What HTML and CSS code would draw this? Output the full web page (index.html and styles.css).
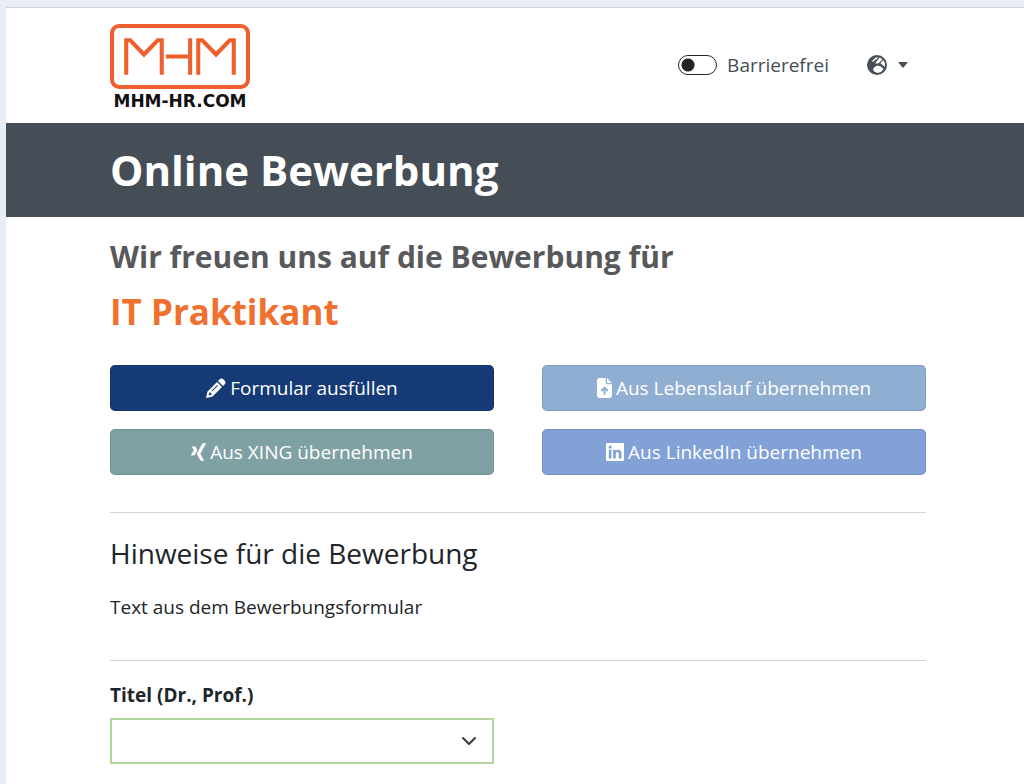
FILE: index.html
```html
<!DOCTYPE html>
<html lang="de">
  <head>
    <meta charset="UTF-8" />
    <meta name="viewport" content="width=device-width, initial-scale=1.0" />
    <title>Online Bewerbung</title>
    <link rel="stylesheet" href="styles.css" />
  </head>
  <body>
    <div class="page">
      <header class="header container">
        <a href="#" class="logo">
          <svg class="logo-mark" viewBox="0 0 138 64" aria-hidden="true">
            <rect x="2" y="2" width="134" height="60" rx="7" />
            <polyline points="16,50 16,16 20,16 33.500,30 47,16 51,16 51,50" />
            <path d="M55 32H79M79 14V50" />
            <polyline points="87,50 87,16 91,16 104.500,30 118,16 122,16 122,50" />
          </svg>
          <span class="logo-text">MHM-HR.COM</span>
        </a>
        <div class="tools">
          <label class="switch">
            <input type="checkbox" role="switch" />
            <span>Barrierefrei</span>
          </label>
          <button type="button" class="lang" aria-label="Sprache">
            <svg class="globe" viewBox="0 0 20 20" aria-hidden="true">
              <circle cx="10" cy="10" r="10" fill="currentColor" />
              <path fill="#fff" d="M5 6 8 3 11 2 10 4 7.500 5.500 6 7ZM12.500 2.500 15.500 4 13.500 6.500 11 8.500 8 8.500 10 6ZM16 5 18 8 18 12 15 9.500 13.500 8.500ZM7.500 12 10.500 10.500 14 11.500 16.500 14 14 17 10.500 18 7 16.500 6 14Z" />
            </svg>
            <span class="caret"></span>
          </button>
        </div>
      </header>

      <div class="title-bar">
        <div class="container">
          <h1>Online Bewerbung</h1>
        </div>
      </div>

      <main class="container">
        <h2 class="intro">Wir freuen uns auf die Bewerbung für</h2>
        <h2 class="job">IT Praktikant</h2>

        <div class="actions">
          <button type="button" class="btn btn-form">
            <svg class="icon" viewBox="0 0 20 20" aria-hidden="true">
              <path fill="currentColor" fill-rule="evenodd" d="M13.500 1.500Q15.500-.5 17.500 1.500L18.500 2.500Q20.500 4.500 18.500 6.500L17 8 12 3ZM11 4 16 9 6.500 18.500 0 20 1.500 13.500ZM11.300 7 5.500 12.800 6.200 13.500 12 7.700ZM3.300 14.500 2.500 17.500 5.500 16.700 5.200 14.800Z" />
            </svg>
            Formular ausfüllen
          </button>
          <button type="button" class="btn btn-cv">
            <svg class="icon icon-file" viewBox="0 0 384 512" aria-hidden="true">
              <path fill="currentColor" fill-rule="evenodd" d="M64 0C29 0 0 29 0 64V448c0 35 29 64 64 64H320c35 0 64-29 64-64V160H256c-18 0-32-14-32-32V0ZM256 0V128H384ZM216 408c0 13-11 24-24 24s-24-11-24-24V306l-31 31c-9 9-25 9-34 0s-9-25 0-34l72-72c9-9 25-9 34 0l72 72c9 9 9 25 0 34s-25 9-34 0l-31-31Z" />
            </svg>
            Aus Lebenslauf übernehmen
          </button>
          <button type="button" class="btn btn-xing">
            <svg class="icon icon-file" viewBox="0 0 384 512" aria-hidden="true">
              <path fill="currentColor" d="M163 210C161 213 138 254 93 333c-5 8-11 12-18 12H10c-8 0-12-7-9-14l69-123v-1L26 131c-4-8 1-14 9-14h65c7 0 13 4 18 12ZM382 46 239 300v1l91 167c4 7 0 14-9 14h-65c-8 0-14-4-18-12L146 301C149 296 197 210 290 44c5-8 11-12 18-12h66c8 0 12 7 8 14Z" />
            </svg>
            Aus XING übernehmen
          </button>
          <button type="button" class="btn btn-linkedin">
            <svg class="icon icon-linkedin" viewBox="0 0 448 448" aria-hidden="true">
              <path fill="currentColor" fill-rule="evenodd" d="M32 0H416c18 0 32 14 32 32V416c0 18-14 32-32 32H32c-18 0-32-14-32-32V32C0 14 14 0 32 0ZM69 170V384h67V170ZM102 64a38 38 0 1 0 0 77 38 38 0 0 0 0-77ZM177 170V384h66V278c0-28 5-55 40-55s35 33 35 57V384h66V267c0-58-12-102-80-102-32 0-54 18-63 35h-1V170Z" />
            </svg>
            Aus LinkedIn übernehmen
          </button>
        </div>

        <section class="section">
          <h3>Hinweise für die Bewerbung</h3>
          <p>Text aus dem Bewerbungsformular</p>
        </section>

        <form class="section form">
          <label for="titel">Titel (Dr., Prof.)</label>
          <div class="select">
            <select id="titel">
              <option></option>
              <option>Dr.</option>
              <option>Prof.</option>
            </select>
            <svg class="chevron" viewBox="0 0 16 16" aria-hidden="true">
              <path d="M2 5l6 6 6-6" />
            </svg>
          </div>
        </form>
      </main>
    </div>
  </body>
</html>
```
FILE: styles.css
```css
* {
  box-sizing: border-box;
}
body {
  margin: 0;
  padding: 7px 0 0 6px;
  background: #e8ecf4;
  color: #212529;
  font-family: "Open Sans", sans-serif;
  font-size: 19px;
  line-height: 28px;
}
h1,
h2,
h3,
p {
  margin: 0;
}
.page {
  min-height: calc(100vh - 7px);
  padding-bottom: 19px;
  border-top: 1px solid #cfd2d9;
  background: #fff;
}
.container {
  padding: 0 98px 0 104px;
}

/* header */
.header {
  display: flex;
  justify-content: space-between;
  padding-top: 16px;
  padding-bottom: 12px;
}
.logo {
  display: flex;
  flex-direction: column;
  align-items: center;
  gap: 3px;
  color: #111;
  text-decoration: none;
}
.logo-mark {
  width: 140px;
  height: 65px;
  fill: none;
  stroke: #ee5f2d;
  stroke-width: 4;
}
.logo-text {
  font-family: "DejaVu Sans", sans-serif;
  font-size: 17px;
  font-weight: bold;
  line-height: 19px;
}
.tools {
  display: flex;
  align-items: center;
  gap: 38px;
  height: 82px;
  padding-right: 18px;
  color: #454d56;
}
.switch {
  display: flex;
  align-items: center;
  gap: 10px;
}
.switch input {
  appearance: none;
  width: 39px;
  height: 20px;
  margin: 0;
  border: 1px solid #212529;
  border-radius: 10px;
  background: radial-gradient(circle at 9px 9px, #212529 6px, transparent 7px);
}
.switch input:checked {
  background-position: 18px 0;
}
.lang {
  display: flex;
  align-items: center;
  gap: 11px;
  padding: 0;
  border: 0;
  background: none;
  color: inherit;
}
.globe {
  width: 20px;
  height: 20px;
}
.caret {
  border: 5px solid transparent;
  border-top: 6px solid;
  border-bottom: 0;
}

.title-bar {
  padding: 16px 0;
  background: #454d56;
  color: #fff;
}
h1 {
  font-size: 42px;
  line-height: 62px;
}
.intro {
  padding-top: 20px;
  color: #58595b;
  font-size: 30px;
  line-height: 40px;
}
.job {
  margin-top: 12px;
  color: #f07030;
  font-size: 35px;
  line-height: 46px;
}

/* buttons */
.actions {
  display: grid;
  grid-template-columns: 1fr 1fr;
  gap: 18px 48px;
  margin: 30px 0 37px;
}
.btn {
  display: flex;
  align-items: center;
  justify-content: center;
  gap: 4px;
  height: 46px;
  padding: 0;
  border: 1px solid rgba(0, 0, 0, 0.1);
  border-radius: 5px;
  color: #fff;
  font: inherit;
}
.btn-form {
  background: #163a76;
}
.btn-cv {
  background: #90add2;
}
.btn-xing {
  background: #80a1a3;
}
.btn-linkedin {
  background: #81a1d7;
}
.icon {
  width: 20px;
  height: 20px;
}
.icon-file {
  width: 15px;
  height: 20px;
}
.icon-linkedin {
  width: 18px;
  height: 18px;
}

.section {
  border-top: 1px solid #d3d4d5;
  padding-top: 20px;
  padding-bottom: 39px;
}
h3 {
  margin-bottom: 20px;
  font-size: 28px;
  font-weight: 400;
  line-height: 40px;
}
.form label {
  display: block;
  margin-bottom: 9px;
  font-weight: 700;
}
.select {
  display: grid;
  width: calc(50% - 24px);
}
.select select {
  grid-area: 1 / 1;
  appearance: none;
  height: 46px;
  padding: 0 40px 0 14px;
  border: 2px solid #b2d59b;
  border-radius: 0;
  background: #fff;
  color: inherit;
  font: inherit;
}
.chevron {
  grid-area: 1 / 1;
  place-self: center end;
  width: 16px;
  height: 16px;
  margin-right: 17px;
  fill: none;
  stroke: #343a40;
  stroke-width: 2;
  stroke-linecap: round;
  stroke-linejoin: round;
  pointer-events: none;
}
```
